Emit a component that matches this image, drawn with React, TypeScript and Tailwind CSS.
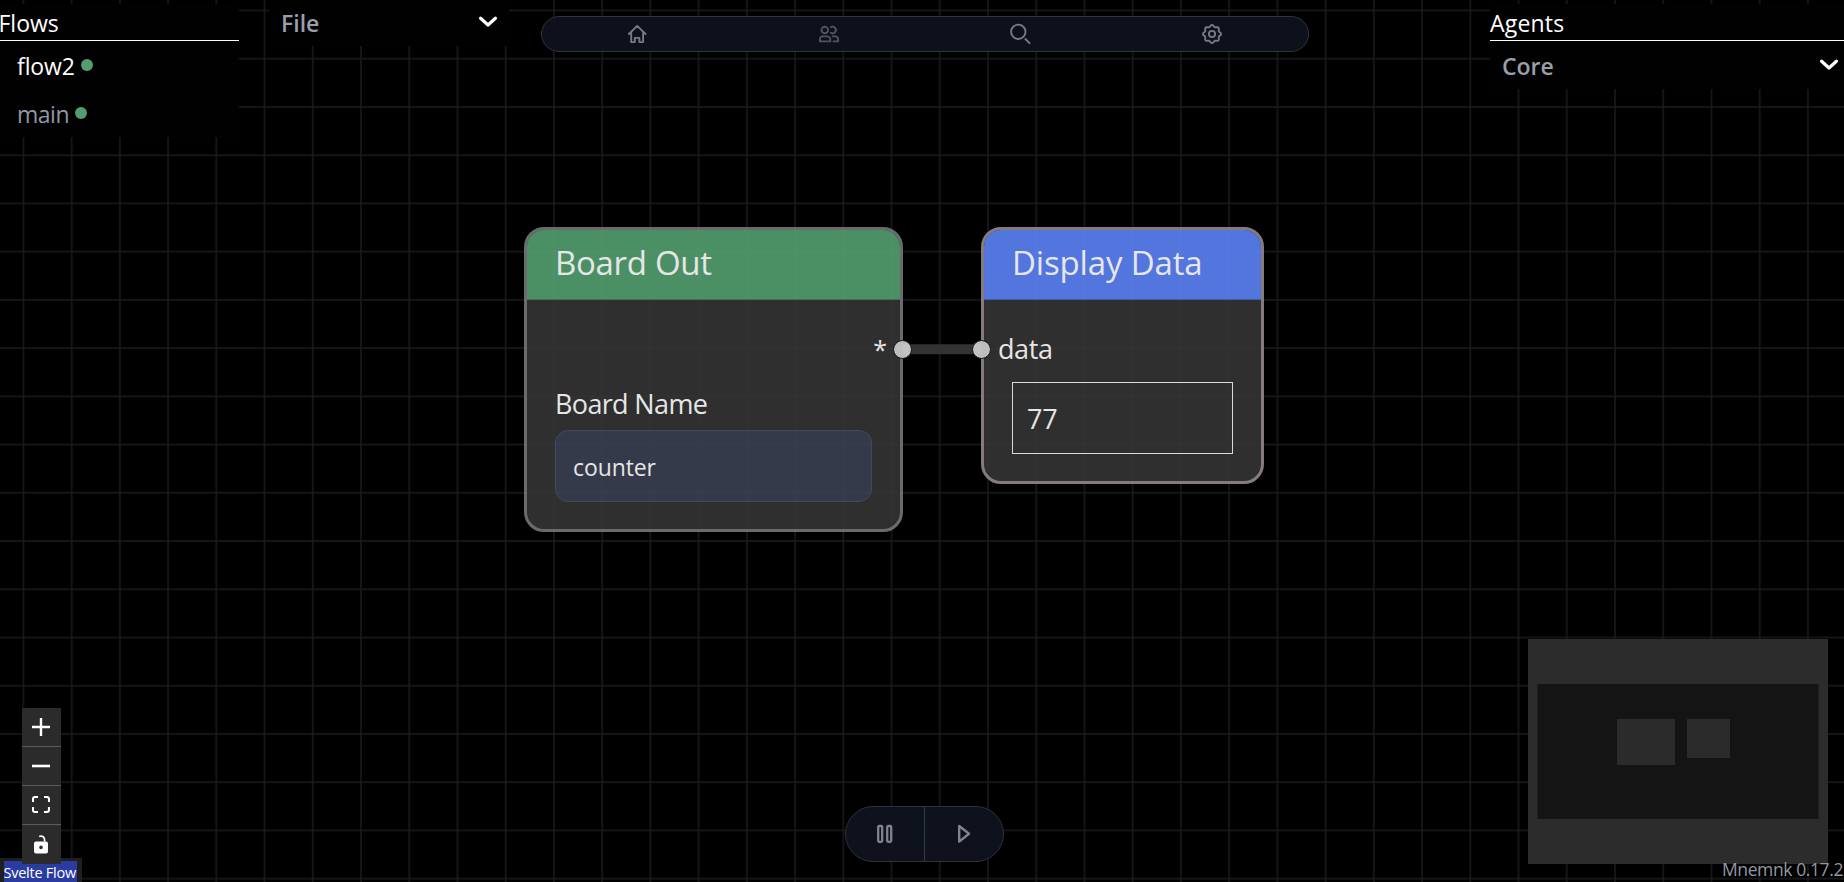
import type { ReactNode } from "react";

function Grid() {
  return (
    <svg className="absolute inset-0 h-full w-full" aria-hidden="true">
      <defs>
        <pattern id="grid" x="23.4" y="10.5" width="48.23" height="48.23" patternUnits="userSpaceOnUse">
          <path d="M0 0H48.23M0 48.23H48.23M0 0V48.23M48.23 0V48.23" stroke="#1b1b1b" strokeWidth="1.5" fill="none" />
        </pattern>
      </defs>
      <rect width="100%" height="100%" fill="url(#grid)" />
    </svg>
  );
}

function Chevron() {
  return (
    <svg width="20" height="14" viewBox="0 0 20 14" fill="none" stroke="#fff" strokeWidth="3.2" strokeLinecap="round" strokeLinejoin="round">
      <path d="M2.6 3.2 10 10l7.4-6.8" />
    </svg>
  );
}

function FlowRow({ name, active = false }: { name: string; active?: boolean }) {
  return (
    <li className="flex h-12 items-center gap-1.5 pl-[17px]">
      <span className={active ? "pt-0.5 tracking-[-0.1px] text-white" : "pt-0.5 tracking-[-0.5px] text-[#9198a4]"}>{name}</span>
      <span className="size-3 rounded-full bg-[#559c70]" />
    </li>
  );
}

function NavIcon({ children, dim = false }: { children: ReactNode; dim?: boolean }) {
  return (
    <button className="flex items-center justify-center">
      <svg
        width="24"
        height="24"
        viewBox="0 0 24 24"
        fill="none"
        stroke={dim ? "#50545f" : "#777a84"}
        strokeWidth="1.9"
        strokeLinecap="round"
        strokeLinejoin="round"
      >
        {children}
      </svg>
    </button>
  );
}

function Handle({ side }: { side: "left" | "right" }) {
  return (
    <span
      className={
        side === "left"
          ? "absolute top-[110px] -left-[12px] size-[19px] rounded-full border border-[#161616] bg-[#d2d2d2]"
          : "absolute top-[110px] -right-[12px] size-[19px] rounded-full border border-[#161616] bg-[#d2d2d2]"
      }
    />
  );
}

function gearPath() {
  const points: string[] = [];
  for (let i = 0; i <= 96; i++) {
    const a = (i / 96) * Math.PI * 2;
    const r = 8.2 + 0.85 * Math.cos(8 * a);
    points.push(`${(12 + r * Math.cos(a)).toFixed(2)} ${(12 + r * Math.sin(a)).toFixed(2)}`);
  }
  return `M${points.join("L")}Z`;
}

export default function App() {
  return (
    <div className="relative h-[882px] w-[1844px] overflow-hidden bg-black font-['Open_Sans',sans-serif] text-[23px] text-white">
      <Grid />

      {/* Flow canvas */}
      <svg className="absolute top-[344px] left-[903px]" width="79" height="11">
        <path d="M0 5.3H79" stroke="#333333" strokeWidth="10" />
      </svg>

      <section className="absolute top-[227px] left-[524px] h-[305px] w-[379px] rounded-[20px] border-[3px] border-[#777777] bg-[#353535] opacity-90">
        <h2 className="flex h-[70px] items-center rounded-t-[17px] border-b border-[#447b59] bg-[#549f71] pb-1 pl-7 text-[33px] tracking-[-0.3px]">
          Board Out
        </h2>
        <div className="mt-[31px] flex h-[37px] items-center justify-end pr-[13px] text-[25px]">*</div>
        <div className="mt-3 flex h-12 items-center pl-7 text-[27px] tracking-[-0.65px]">Board Name</div>
        <div className="mx-7 mt-0.5 flex h-[72px] items-center rounded-[13px] border border-[#4a5261] bg-[#3a4151] pt-[3px] pl-[17px] tracking-[-0.1px]">
          counter
        </div>
        <Handle side="right" />
      </section>

      <section className="absolute top-[227px] left-[981px] h-[257px] w-[283px] rounded-[20px] border-[3px] border-[#958989] bg-[#353535] opacity-90">
        <h2 className="flex h-[70px] items-center rounded-t-[17px] border-b border-[#4863b4] bg-[#5c82f7] pb-1 pl-7 text-[33px] tracking-[-0.15px]">
          Display Data
        </h2>
        <div className="mt-[31px] flex h-[37px] items-center pl-3.5 text-[27px] tracking-[-0.4px]">data</div>
        <div className="mt-3.5 ml-7 flex h-[72px] w-[221px] items-center border border-[#f2f2f2] pt-0.5 pl-3.5 text-[27px] tracking-[-0.3px]">
          77
        </div>
        <Handle side="left" />
      </section>

      {/* Flows list */}
      <aside className="absolute top-1 left-0 w-[239px] bg-[#010101]">
        <h3 className="-ml-px h-[37px] border-b border-white pt-px pl-px leading-[37px] -indent-[1.5px]">Flows</h3>
        <ul>
          <FlowRow name="flow2" active />
          <FlowRow name="main" />
        </ul>
      </aside>

      {/* File menu */}
      <div className="absolute top-0 left-[269px] flex h-[46px] w-[240px] items-center justify-between bg-[#010101] pr-[11px] pl-3 font-semibold text-[#9a9fab]">
        <span>File</span>
        <span className="pb-0.5"><Chevron /></span>
      </div>

      {/* Navigation */}
      <nav className="absolute top-4 left-[541px] grid h-9 w-[768px] grid-cols-4 rounded-full border border-[#30343f] bg-[#0e121c]/95">
        <NavIcon>
          <path d="M2.9 12 11.200 3.900 19.500 12M5.200 10.500v9.600h3.600v-4.200h4.600v4.200h3.700v-9.600" />
        </NavIcon>
        <NavIcon dim>
          <circle cx="7.8" cy="8" r="3.3" />
          <path d="M13.8 5.2a3.3 3.3 0 1 1 0 5.6M5.6 14.4h4.4a3.4 3.4 0 0 1 3.4 3.4v1.6H2.9v-2.3a2.7 2.7 0 0 1 2.7-2.7ZM15.6 14.4h2.6a2.9 2.9 0 0 1 2.9 2.9v2.1h-4.6" />
        </NavIcon>
        <NavIcon>
          <circle cx="9.3" cy="9.8" r="7.2" />
          <path d="m16.4 17 4.100 4.200" />
        </NavIcon>
        <NavIcon>
          <path d={gearPath()} />
          <circle cx="12" cy="12" r="3.1" />
        </NavIcon>
      </nav>

      {/* Agents list */}
      <aside className="absolute top-1 left-[1490px] w-[354px] bg-[#010101]">
        <h3 className="h-[37px] border-b border-white pt-px leading-[37px] tracking-[0.2px]">Agents</h3>
        <div className="flex h-12 items-center justify-between pr-[5px] pl-3 font-semibold text-[#9a9fab]">
          <span className="pt-0.5">Core</span>
          <Chevron />
        </div>
      </aside>

      {/* Attribution */}
      <div className="absolute bottom-0 left-0 flex h-6 w-[82px] items-end bg-[#1f1f1f] pl-1">
        <span className="h-[21px] w-[73px] bg-[#2a3ba1] text-[14.5px] leading-[23px] tracking-[-0.25px] whitespace-nowrap -indent-[0.5px]">Svelte Flow</span>
      </div>

      {/* Zoom controls */}
      <div className="absolute top-[708px] left-[22px] grid h-[156px] w-[39px] grid-rows-4 bg-[#2b2b2b]">
        <button className="flex items-center justify-center border-b border-[#5c5c5c] pr-px">
          <svg width="18" height="18" viewBox="0 0 18 18" stroke="#fff" strokeWidth="2.4"><path d="M0 9h18M9 0v18" /></svg>
        </button>
        <button className="flex items-center justify-center border-b border-[#5c5c5c] pr-px pb-px">
          <svg width="18" height="18" viewBox="0 0 18 18" stroke="#fff" strokeWidth="2.6"><path d="M0 9h18" /></svg>
        </button>
        <button className="flex items-center justify-center border-b border-[#5c5c5c] pr-px pb-px">
          <svg width="18" height="17" viewBox="0 0 18 17" fill="none" stroke="#fff" strokeWidth="2.1">
            <path d="M1 6V3.2Q1 1 3.2 1H6M12 1h2.800Q17 1 17 3.200V6M17 11v2.800Q17 16 14.800 16H12M6 16H3.200Q1 16 1 13.800V11" />
          </svg>
        </button>
        <button className="flex items-center justify-center pr-[2px]">
          <svg width="14" height="19" viewBox="0 0 14 19">
            <path d="M5.200 1.600Q7.600 .4 9.600 2.100 10.700 3.200 10.700 6.500" fill="none" stroke="#fff" strokeWidth="1.700" />
            <path fillRule="evenodd" fill="#fff" d="M2 6.400h10a2 2 0 0 1 2 2V16.500a2 2 0 0 1-2 2H2a2 2 0 0 1-2-2V8.400a2 2 0 0 1 2-2ZM7 10.600a1.800 1.800 0 1 0 0 3.600 1.800 1.800 0 0 0 0-3.600Z" />
          </svg>
        </button>
      </div>

      {/* Playback */}
      <div className="absolute top-[806px] left-[845px] grid h-14 w-[159px] grid-cols-2 rounded-full border border-[#2d313c] bg-[#0f131d]/95">
        <button className="flex items-center justify-center border-r border-[#343946]">
          <svg width="18" height="20" viewBox="0 0 18 20" fill="none" stroke="#81848d" strokeWidth="2.300">
            <rect x="2.200" y="2" width="4" height="15.800" rx="1" />
            <rect x="11.200" y="2" width="4" height="15.800" rx="1" />
          </svg>
        </button>
        <button className="flex items-center justify-center">
          <svg width="14" height="20" viewBox="0 0 14 20" fill="none" stroke="#81848d" strokeWidth="2.400" strokeLinejoin="round">
            <path d="M2.200 2v15.600L12 9.800Z" />
          </svg>
        </button>
      </div>

      {/* Minimap */}
      <svg className="absolute top-[639px] left-[1528px]" width="300" height="225">
        <rect width="300" height="225" fill="#2c2c2c" />
        <rect x="9.500" y="45" width="281" height="135" fill="#141414" />
        <rect x="89" y="80" width="58" height="46" fill="#2b2b2b" />
        <rect x="159" y="80" width="43" height="39" fill="#2b2b2b" />
      </svg>

      <div className="absolute right-px bottom-0 h-6 text-[17.5px] leading-[22px] tracking-[-0.4px] text-[#9298a3]">Mnemnk 0.17.2</div>
    </div>
  );
}
